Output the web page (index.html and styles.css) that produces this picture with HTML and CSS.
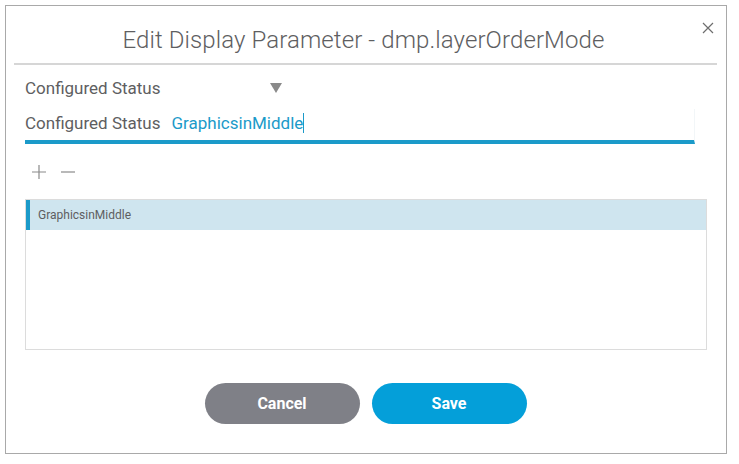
FILE: index.html
```html
<!DOCTYPE html>
<html lang="en">
<head>
  <meta charset="UTF-8">
  <title>Edit Display Parameter</title>
  <link rel="stylesheet" href="styles.css">
</head>
<body>

  <div class="dialog">
    <!-- Header -->
    <div class="dialog-header">
      <h1 class="dialog-title">Edit Display Parameter - dmp.layerOrderMode</h1>
      <button class="close-btn" aria-label="Close">
        <svg width="12" height="12" viewBox="0 0 12 12">
          <path d="M1 1 L11 11 M11 1 L1 11" stroke="#6e6e6e" stroke-width="1.2" fill="none"/>
        </svg>
      </button>
    </div>

    <div class="dialog-body">
      <!-- Select -->
      <div class="select-row">
        <span class="select-label">Configured Status</span>
        <span class="select-caret"></span>
      </div>

      <!-- Input -->
      <div class="input-row">
        <span class="input-label">Configured Status</span>
        <span class="input-value">GraphicsinMiddle</span><span class="cursor"></span>
      </div>

      <!-- Add / remove -->
      <div class="tools">
        <svg width="16" height="16" viewBox="0 0 16 16">
          <path d="M8 1 V15 M1 8 H15" stroke="#8a8a8a" stroke-width="1.2" fill="none"/>
        </svg>
        <svg width="16" height="16" viewBox="0 0 16 16">
          <path d="M1 8 H15" stroke="#8a8a8a" stroke-width="1.2" fill="none"/>
        </svg>
      </div>

      <!-- Values list -->
      <div class="value-list">
        <div class="value-item selected">GraphicsinMiddle</div>
      </div>
    </div>

    <!-- Footer -->
    <div class="dialog-footer">
      <button class="btn btn-cancel">Cancel</button>
      <button class="btn btn-save">Save</button>
    </div>
  </div>

</body>
</html>
```

FILE: styles.css
```css
* {
  margin: 0;
  padding: 0;
  box-sizing: border-box;
  font-family: Roboto, "Liberation Sans", sans-serif;
}

body {
  background: #fff;
  color: #5e5e61;
}

.dialog {
  margin: 5px 0 0 5px;
  width: 722px;
  height: 449px;
  border: 1px solid #a9a9a9;
  position: relative;
}

.dialog-header {
  height: 59px;
  margin: 0 9px 0 8px;
  border-bottom: 2px solid #d6d6d6;
  display: flex;
  align-items: center;
  justify-content: center;
}

.dialog-title {
  font-size: 24px;
  font-weight: 300;
  color: #5e5e61;
  padding-top: 10px;
  padding-right: 4px;
  letter-spacing: 0.1px;
}

.close-btn {
  position: absolute;
  top: 15px;
  right: 11px;
  border: none;
  background: none;
  width: 14px;
  height: 14px;
  display: flex;
  align-items: center;
  justify-content: center;
}

.dialog-body {
  padding: 0 19px;
}

.select-row {
  width: 259px;
  height: 44px;
  display: flex;
  align-items: center;
  justify-content: space-between;
  padding-top: 2px;
}

.select-label,
.input-label {
  font-size: 17px;
  color: #5e5e61;
}

.select-caret {
  width: 0;
  height: 0;
  border-left: 6px solid transparent;
  border-right: 6px solid transparent;
  border-top: 10px solid #8a8a8a;
  margin-right: 2px;
}

.input-row {
  width: 670px;
  height: 35px;
  display: flex;
  align-items: center;
  border-bottom: 4px solid #1b9ac9;
  border-right: 1px solid #f2f6f8;
  padding-bottom: 4px;
}

.input-label {
  margin-right: 11px;
}

.input-value {
  font-size: 17px;
  color: #1b9ac9;
}

.cursor {
  display: inline-block;
  width: 1px;
  height: 20px;
  background: #1b9ac9;
}

.tools {
  height: 55px;
  display: flex;
  align-items: center;
  gap: 13px;
  padding-left: 6px;
}

.value-list {
  width: 682px;
  height: 151px;
  border: 1px solid #dcdcdc;
}

.value-item {
  height: 30px;
  display: flex;
  align-items: center;
  padding-left: 12px;
  font-size: 12px;
  color: #5e5e61;
}

.value-item.selected {
  background: #cfe5ef;
  border-left: 4px solid #1b9ac9;
  padding-left: 8px;
}

.dialog-footer {
  display: flex;
  justify-content: center;
  gap: 12px;
  margin-top: 33px;
  padding-right: 1px;
}

.btn {
  width: 155px;
  height: 41px;
  border: none;
  border-radius: 21px;
  color: #fff;
  font-size: 16px;
  font-weight: bold;
  cursor: pointer;
}

.btn-cancel {
  background: #7f8087;
}

.btn-save {
  background: #049fd9;
}
```
